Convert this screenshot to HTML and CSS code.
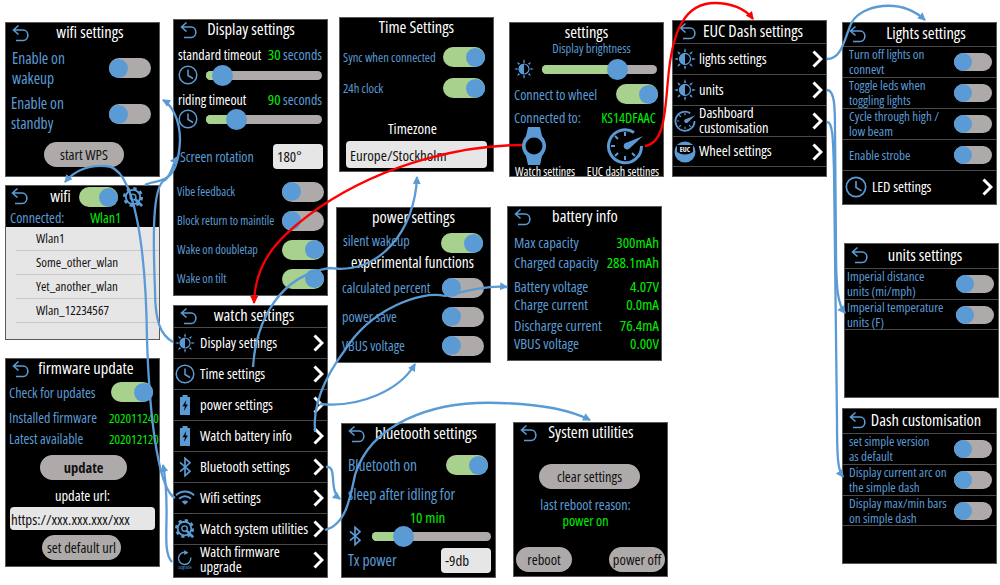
FILE: index.html
```html
<!DOCTYPE html>
<html lang="en">
<head>
    <meta charset="UTF-8">
    <meta name="viewport" content="width=device-width, initial-scale=1.0">
    <title>Watch app settings map</title>
    <link rel="stylesheet" href="styles.css">
</head>
<body>

<svg class="sprite" width="0" height="0">
    <symbol id="i-back" viewBox="0 0 18 18"><path d="M6.5 1.5 L1.5 6 L6.500 10.500 M1.500 6 H11 C17.500 6 17.500 16.500 11 16.500 H4" fill="none" stroke="#5b9bd5" stroke-width="1.600"/></symbol>
    <symbol id="i-sun" viewBox="0 0 22 22"><circle cx="11" cy="11" r="5.500" fill="none" stroke="#5b9bd5" stroke-width="1.300"/><path d="M11 5.500 A5.500 5.500 0 0 0 11 16.500 Z" fill="#5b9bd5"/><path d="M11 0 L12.200 3.800 H9.800 Z M11 22 L12.200 18.200 H9.800 Z M0 11 L3.800 12.200 V9.800 Z M22 11 L18.200 12.200 V9.800 Z M3.200 3.200 L6.700 5 L5 6.700 Z M18.800 3.200 L15.300 5 L17 6.700 Z M3.200 18.800 L6.700 17 L5 15.300 Z M18.800 18.800 L15.300 17 L17 15.300 Z" fill="#5b9bd5"/></symbol>
    <symbol id="i-clock" viewBox="0 0 20 20"><circle cx="10" cy="10" r="8.800" fill="none" stroke="#5b9bd5" stroke-width="1.500"/><path d="M10 4.500 V10.500 L15 13.500" fill="none" stroke="#5b9bd5" stroke-width="1.500"/></symbol>
    <symbol id="i-batt" viewBox="0 0 20 24"><path d="M7 0 H13 V2.500 H16 V24 H4 V2.500 H7 Z" fill="#5b9bd5"/><path d="M11.500 6 L7 13.500 H10 L8.500 19.500 L13.500 11.500 H10.500 Z" fill="#000"/></symbol>
    <symbol id="i-bt" viewBox="0 0 16 24"><path d="M2 6.500 L14 17 L8 22.500 V1.500 L14 7 L2 17.500" fill="none" stroke="#5b9bd5" stroke-width="2"/></symbol>
    <symbol id="i-wifi" viewBox="0 0 22 20"><path d="M1 7 C7 1.500 15 1.500 21 7 M4.500 10.800 C8.500 7.500 13.500 7.500 17.500 10.800" fill="none" stroke="#5b9bd5" stroke-width="2"/><path d="M7.500 14 C9.500 12.300 12.500 12.300 14.500 14 L11 17.500 Z" fill="#5b9bd5"/></symbol>
    <symbol id="i-cog" viewBox="0 0 22 22"><circle cx="10.500" cy="10.500" r="7.500" fill="none" stroke="#5b9bd5" stroke-width="2"/><circle cx="10.500" cy="10.500" r="9" fill="none" stroke="#5b9bd5" stroke-width="3" stroke-dasharray="3.500 3.570"/><circle cx="10.500" cy="10.500" r="3" fill="none" stroke="#5b9bd5" stroke-width="1.500"/><path d="M12.500 12.500 L20 20" stroke="#5b9bd5" stroke-width="3"/></symbol>
    <symbol id="i-upgrade" viewBox="0 0 22 26"><path d="M18.500 10 A8 8 0 1 1 13 3.300" fill="none" stroke="#5b9bd5" stroke-width="1.800"/><path d="M10 0 L15.500 3.500 L10 6.500 Z" fill="#5b9bd5"/><text x="11" y="25" class="tiny" text-anchor="middle">upgrade</text></symbol>
    <symbol id="i-watch" viewBox="0 0 24 38"><path d="M6 0 H18 L20 9 Q24 14 24 19 Q24 24 20 29 L18 38 H6 L4 29 Q0 24 0 19 Q0 14 4 9 Z" fill="#5b9bd5"/><circle cx="12" cy="19" r="8.500" fill="#000"/></symbol>
    <symbol id="i-gauge" viewBox="0 0 38 38"><path d="M28 5.500 A16.500 16.500 0 1 0 35.500 19" fill="none" stroke="#5b9bd5" stroke-width="3"/><path d="M19 5 V9 M5 19 H9 M19 29 V33 M9 9 L12 12 M9 29 L12 26 M29 29 L26 26" stroke="#5b9bd5" stroke-width="2"/><path d="M37 9 L21 15.500 A3.500 3.500 0 1 0 24 21 Z" fill="#5b9bd5"/></symbol>
    <symbol id="i-euc" viewBox="0 0 22 22"><circle cx="11" cy="11" r="10.500" fill="#5b9bd5"/><path d="M3 4 H19 V11 Q11 16 3 11 Z" fill="#000"/><text x="11" y="10.500" class="badge" text-anchor="middle">EUC</text></symbol>
    <symbol id="i-chev" viewBox="0 0 11 18"><path d="M1.500 1.500 L9 9 L1.500 16.500" fill="none" stroke="#fff" stroke-width="3"/></symbol>
</svg>

<div class="canvas">

    <section class="screen s-wifi">
        <div class="head"><svg class="back"><use href="#i-back"/></svg><h2>wifi settings</h2></div>
        <div class="row big wifi-row"><span>Enable on<br>wakeup</span><span class="toggle"></span></div>
        <div class="row big wifi-row2"><span>Enable on<br>standby</span><span class="toggle"></span></div>
        <button class="btn wps">start WPS</button>
    </section>

    <section class="screen s-display">
        <div class="head"><svg class="back"><use href="#i-back"/></svg><h2>Display settings</h2></div>
        <div class="row timeout"><span class="white">standard timeout</span><span><b class="ok">30</b> seconds</span></div>
        <div class="row slide-row"><svg class="ico"><use href="#i-clock"/></svg><div class="slider"><div class="fill" style="width:15%"></div></div></div>
        <div class="row timeout gap4"><span class="white">riding timeout</span><span><b class="ok">90</b> seconds</span></div>
        <div class="row slide-row"><svg class="ico"><use href="#i-clock"/></svg><div class="slider"><div class="fill" style="width:27%"></div></div></div>
        <div class="row rotation"><span>Screen rotation</span><span class="box">180°</span></div>
        <div class="row tall first"><span>Vibe feedback</span><span class="toggle"></span></div>
        <div class="row tall"><span>Block return to maintile</span><span class="toggle"></span></div>
        <div class="row tall"><span>Wake on doubletap</span><span class="toggle on"></span></div>
        <div class="row tall"><span>Wake on tilt</span><span class="toggle on"></span></div>
    </section>

    <section class="screen s-list">
        <div class="list-head">
            <svg class="back"><use href="#i-back"/></svg>
            <h2>wifi</h2>
            <span class="toggle on"></span>
            <svg class="cog"><use href="#i-cog"/></svg>
        </div>
        <div class="row connected"><span>Connected:</span><span class="ok">Wlan1</span></div>
        <ul class="wlans">
            <li>Wlan1</li>
            <li>Some_other_wlan</li>
            <li>Yet_another_wlan</li>
            <li>Wlan_12234567</li>
        </ul>
    </section>

    <section class="screen s-firmware">
        <div class="head"><svg class="back"><use href="#i-back"/></svg><h2>firmware update</h2></div>
        <div class="row check"><span>Check for updates</span><span class="toggle on"></span></div>
        <div class="row fw first"><span>Installed firmware</span><span class="ok num">2020112401</span></div>
        <div class="row fw"><span>Latest available</span><span class="ok num">2020121202</span></div>
        <button class="btn update"><b>update</b></button>
        <div class="url-label">update url:</div>
        <div class="box url">https://xxx.xxx.xxx/xxx</div>
        <button class="btn default">set default url</button>
    </section>

    <section class="screen s-watch">
        <div class="head"><svg class="back"><use href="#i-back"/></svg><h2>watch settings</h2></div>
        <div class="menu"><svg class="ico"><use href="#i-sun"/></svg><span>Display settings</span><svg class="chev"><use href="#i-chev"/></svg></div>
        <div class="menu"><svg class="ico"><use href="#i-clock"/></svg><span>Time settings</span><svg class="chev"><use href="#i-chev"/></svg></div>
        <div class="menu"><svg class="ico"><use href="#i-batt"/></svg><span>power settings</span><svg class="chev"><use href="#i-chev"/></svg></div>
        <div class="menu"><svg class="ico"><use href="#i-batt"/></svg><span>Watch battery info</span><svg class="chev"><use href="#i-chev"/></svg></div>
        <div class="menu"><svg class="ico"><use href="#i-bt"/></svg><span>Bluetooth settings</span><svg class="chev"><use href="#i-chev"/></svg></div>
        <div class="menu"><svg class="ico"><use href="#i-wifi"/></svg><span>Wifi settings</span><svg class="chev"><use href="#i-chev"/></svg></div>
        <div class="menu"><svg class="ico"><use href="#i-cog"/></svg><span>Watch system utilities</span><svg class="chev"><use href="#i-chev"/></svg></div>
        <div class="menu"><svg class="ico"><use href="#i-upgrade"/></svg><span>Watch firmware<br>upgrade</span><svg class="chev"><use href="#i-chev"/></svg></div>
    </section>

    <section class="screen s-time">
        <div class="head plain"><h2>Time Settings</h2></div>
        <div class="row time-row"><span>Sync when connected</span><span class="toggle on"></span></div>
        <div class="row time-row2"><span>24h clock</span><span class="toggle on"></span></div>
        <h3 class="zone">Timezone</h3>
        <div class="box zone-box">Europe/Stockholm</div>
    </section>

    <section class="screen s-settings">
        <div class="head plain"><h2>settings</h2></div>
        <div class="centered bright">Display brightness</div>
        <div class="row slide-row set-slide"><svg class="ico"><use href="#i-sun"/></svg><div class="slider"><div class="fill" style="width:66%"></div></div></div>
        <div class="row wheel"><span>Connect to wheel</span><span class="toggle on"></span></div>
        <div class="row conn"><span>Connected to:</span><span class="ok">KS14DFAAC</span></div>
        <div class="picks">
            <div class="pick"><svg class="watch"><use href="#i-watch"/></svg><span>Watch settings</span></div>
            <div class="pick"><svg class="gauge"><use href="#i-gauge"/></svg><span>EUC dash settings</span></div>
        </div>
    </section>

    <section class="screen s-power">
        <div class="head plain"><h2>power settings</h2></div>
        <div class="row silent"><span>silent wakeup</span><span class="toggle on"></span></div>
        <h3 class="exp">experimental functions</h3>
        <div class="row pow"><span>calculated percent</span><span class="toggle"></span></div>
        <div class="row pow"><span>power save</span><span class="toggle"></span></div>
        <div class="row pow"><span>VBUS voltage</span><span class="toggle"></span></div>
    </section>

    <section class="screen s-battery">
        <div class="head"><svg class="back"><use href="#i-back"/></svg><h2>battery info</h2></div>
        <div class="stats">
            <div class="row stat"><span>Max capacity</span><b class="ok">300mAh</b></div>
            <div class="row stat"><span>Charged capacity</span><b class="ok">288.1mAh</b></div>
            <div class="row stat"><span>Battery voltage</span><b class="ok">4.07V</b></div>
            <div class="row stat"><span>Charge current</span><b class="ok">0.0mA</b></div>
            <div class="row stat"><span>Discharge current</span><b class="ok">76.4mA</b></div>
            <div class="row stat"><span>VBUS voltage</span><b class="ok">0.00V</b></div>
        </div>
    </section>

    <section class="screen s-bt">
        <div class="head"><svg class="back"><use href="#i-back"/></svg><h2>bluetooth settings</h2></div>
        <div class="row bt-on"><span>Bluetooth on</span><span class="toggle on"></span></div>
        <div class="row bt-sleep"><span>sleep after idling for</span></div>
        <div class="centered ok bt-min">10 min</div>
        <div class="row slide-row bt-slide"><svg class="ico"><use href="#i-bt"/></svg><div class="slider"><div class="fill" style="width:27%"></div></div></div>
        <div class="row bt-tx"><span>Tx power</span><span class="box">-9db</span></div>
    </section>

    <section class="screen s-system">
        <div class="head"><svg class="back"><use href="#i-back"/></svg><h2>System utilities</h2></div>
        <button class="btn clear">clear settings</button>
        <div class="centered reason">last reboot reason:</div>
        <div class="centered ok reason">power on</div>
        <div class="sys-btns"><button class="btn">reboot</button><button class="btn">power off</button></div>
    </section>

    <section class="screen s-euc">
        <div class="head"><svg class="back"><use href="#i-back"/></svg><h2>EUC Dash settings</h2></div>
        <div class="menu"><svg class="ico"><use href="#i-sun"/></svg><span>lights settings</span><svg class="chev"><use href="#i-chev"/></svg></div>
        <div class="menu"><svg class="ico"><use href="#i-sun"/></svg><span>units</span><svg class="chev"><use href="#i-chev"/></svg></div>
        <div class="menu"><svg class="ico"><use href="#i-gauge"/></svg><span>Dashboard<br>customisation</span><svg class="chev"><use href="#i-chev"/></svg></div>
        <div class="menu last"><svg class="ico"><use href="#i-euc"/></svg><span>Wheel settings</span><svg class="chev"><use href="#i-chev"/></svg></div>
    </section>

    <section class="screen s-lights">
        <div class="head"><svg class="back"><use href="#i-back"/></svg><h2>Lights settings</h2></div>
        <div class="opt"><span>Turn off lights on<br>connevt</span><span class="toggle small"></span></div>
        <div class="opt"><span>Toggle leds when<br>toggling lights</span><span class="toggle small"></span></div>
        <div class="opt"><span>Cycle through high /<br>low beam</span><span class="toggle small"></span></div>
        <div class="opt"><span>Enable strobe</span><span class="toggle small"></span></div>
        <div class="menu led"><svg class="ico"><use href="#i-clock"/></svg><span>LED settings</span><svg class="chev"><use href="#i-chev"/></svg></div>
    </section>

    <section class="screen s-units">
        <div class="head"><svg class="back"><use href="#i-back"/></svg><h2>units settings</h2></div>
        <div class="opt"><span>Imperial distance<br>units (mi/mph)</span><span class="toggle small"></span></div>
        <div class="opt last"><span>Imperial temperature<br>units (F)</span><span class="toggle small"></span></div>
    </section>

    <section class="screen s-dash">
        <div class="head"><svg class="back"><use href="#i-back"/></svg><h2>Dash customisation</h2></div>
        <div class="opt"><span>set simple version<br>as default</span><span class="toggle small"></span></div>
        <div class="opt"><span>Display current arc on<br>the simple dash</span><span class="toggle small"></span></div>
        <div class="opt last"><span>Display max/min bars<br>on simple dash</span><span class="toggle small"></span></div>
    </section>

    <!-- navigation arrows between the screens -->
    <svg class="wires" width="1000" height="585" viewBox="0 0 1000 585">
        <defs>
            <marker id="tip-blue" markerWidth="9" markerHeight="8" refX="7" refY="4" orient="auto" markerUnits="userSpaceOnUse"><path d="M0 0 L8 4 L0 8 Z" fill="#5b9bd5"/></marker>
            <marker id="tip-red" markerWidth="9" markerHeight="8" refX="7" refY="4" orient="auto" markerUnits="userSpaceOnUse"><path d="M0 0 L8 4 L0 8 Z" fill="#f00"/></marker>
        </defs>
        <g class="blue" marker-end="url(#tip-blue)">
            <path d="M175 498 C160 490 150 430 147 340 C146 250 135 165 105 166 C90 165 75 170 65 182"/>
            <path d="M172 562 C160 550 172 510 163 465"/>
            <path d="M173 342 C160 335 155 320 155 290 C153 240 152 185 165 180 C172 175 172 165 177 157"/>
            <path d="M145 185 C155 178 178 190 180 140 C180 120 172 105 163 100"/>
            <path d="M253 367 C256 320 280 275 330 268 C380 275 415 230 417 177"/>
            <path d="M315 432 C312 400 330 370 345 350 C370 310 420 290 445 296 C470 290 490 285 507 287"/>
            <path d="M320 404 C360 408 400 390 415 364"/>
            <path d="M326 467 C338 465 328 490 340 499"/>
            <path d="M325 530 C345 525 350 500 355 475 C370 425 430 400 500 403 C540 404 570 410 590 420"/>
            <path d="M827 59 C843 59 845 35 852 22 C862 5 900 -3 925 20"/>
            <path d="M827 90 C835 90 835 110 835 130 L836 250 C836 290 838 305 845 313"/>
            <path d="M827 122 C833 122 833 140 834 170 L837 420 C837 460 838 470 843 477"/>
        </g>
        <g class="red" marker-end="url(#tip-red)">
            <path d="M522 145 C470 145 390 160 320 207 C280 235 255 260 254 303"/>
            <path d="M645 146 C665 143 665 110 668 80 C672 30 685 3 715 3 C730 3 745 8 753 19"/>
        </g>
    </svg>

</div>

</body>
</html>
```

FILE: styles.css
```css
/* General Styling */
html, body {
    margin: 0;
    background-color: #ffffff;
}
body {
    font-family: "Open Sans", "Liberation Sans", sans-serif;
    font-stretch: 75%;
    font-size: 14px;
    color: #5b9bd5;
}
.sprite {
    display: block;
    height: 0;
}
.canvas {
    position: relative;
    width: 1000px;
    height: 585px;
    overflow: hidden;
}
.wires {
    position: absolute;
    left: 0;
    top: 0;
    pointer-events: none;
}
.wires g path {
    fill: none;
    stroke-width: 2.300;
}
.wires .blue path { stroke: #5b9bd5; }
.wires .red path { stroke: #f00; }
.tiny {
    font-size: 6px;
    fill: #5b9bd5;
}
.badge {
    font-size: 7px;
    font-weight: 700;
    fill: #fff;
}

/* Screens sit on a free canvas, each at its own spot */
.screen {
    position: absolute;
    box-sizing: border-box;
    width: 155px;
    height: 155px;
    background-color: #000;
    border: 1px solid #595959;
    overflow: hidden;
}
.s-wifi { left: 5px; top: 22px; }
.s-display { left: 173px; top: 19px; height: 277px; }
.s-list { left: 5px; top: 185px; }
.s-firmware { left: 5px; top: 358px; height: 209px; }
.s-watch { left: 173px; top: 305px; height: 273px; }
.s-time { left: 339px; top: 17px; }
.s-settings { left: 509px; top: 22px; }
.s-power { left: 336px; top: 207px; height: 156px; }
.s-battery { left: 507px; top: 206px; }
.s-bt { left: 341px; top: 423px; }
.s-system { left: 513px; top: 422px; }
.s-euc { left: 672px; top: 20px; height: 157px; }
.s-lights { left: 842px; top: 22px; height: 183px; }
.s-units { left: 844px; top: 243px; }
.s-dash { left: 842px; top: 408px; height: 156px; }

/* Header */
.head {
    display: flex;
    align-items: center;
    height: 21px;
    padding: 0 17px 0 6px;
}
.head h2 {
    flex: 1;
    margin: 0 0 4px;
    font-size: 16.500px;
    font-weight: 500;
    line-height: 21px;
    text-align: center;
    color: #fff;
}
.head.plain {
    padding: 0;
}
.back {
    width: 18px;
    height: 18px;
    margin-bottom: 2px;
    flex: none;
}
.s-wifi .head, .s-bt .head { padding-right: 9px; }
.s-display .head, .s-battery .head, .s-system .head { padding-right: 23px; }
.s-lights .head, .s-dash .head { padding-right: 11px; }
.s-euc .head { height: 22px; }
.s-lights .head { height: 23px; }
.s-units .head, .s-dash .head { height: 24px; }

/* Rows and controls */
.row {
    display: flex;
    align-items: center;
    justify-content: space-between;
    padding: 0 8px 0 6px;
}
.toggle {
    display: flex;
    align-items: center;
    flex: none;
    box-sizing: border-box;
    width: 42px;
    height: 20px;
    border-radius: 10px;
    background-color: #aeaaaa;
}
.toggle::before {
    content: "";
    width: 19px;
    height: 19px;
    border-radius: 50%;
    background-color: #5b9bd5;
}
.toggle.on {
    justify-content: flex-end;
    background-color: #a9d18e;
}
.toggle.small {
    width: 38px;
    height: 18px;
}
.toggle.small::before {
    width: 18px;
    height: 18px;
}
.slider {
    flex: 1;
    height: 9px;
    border-radius: 5px;
    background-color: #aeaaaa;
}
.fill {
    position: relative;
    height: 9px;
    border-radius: 5px;
    background-color: #a9d18e;
}
.fill::after {
    content: "";
    position: absolute;
    right: -10px;
    top: -6px;
    width: 21px;
    height: 21px;
    border-radius: 50%;
    background-color: #5b9bd5;
}
.box {
    box-sizing: border-box;
    display: flex;
    align-items: center;
    width: 50px;
    height: 25px;
    padding-left: 4px;
    border-radius: 4px;
    background-color: #e7e6e6;
    color: #111;
    font-size: 15px;
}
.btn {
    display: block;
    height: 25px;
    padding: 0;
    border: none;
    border-radius: 13px;
    background-color: #aeaaaa;
    color: #111;
    font-family: inherit;
    font-stretch: 75%;
    font-size: 14.500px;
    font-weight: 500;
}
.ico {
    width: 20px;
    height: 20px;
    flex: none;
}
.white { color: #fff; }
.ok { color: #00f000; font-weight: 500; }
.centered { text-align: center; }
.slide-row {
    height: 20px;
    gap: 8px;
    padding: 0 5px 0 4px;
}

/* wifi settings */
.big {
    font-size: 15.500px;
    line-height: 20px;
}
.wifi-row { height: 44px; margin-top: 2px; }
.wifi-row2 { height: 44px; margin-top: 2px; padding-left: 5px; }
.wifi-row2 span:first-child { margin-bottom: 3px; }
.wps { width: 80px; margin: 6px 0 0 38px; }

/* Display settings */
.timeout {
    height: 22px;
    margin-top: 2px;
    font-size: 14px;
    padding: 0 5px 0 4px;
    white-space: nowrap;
}
.timeout b { font-size: 15px; }
.gap4 { margin: 3px 0 -1px; }
.rotation {
    height: 26px;
    margin-top: 14px;
    padding-right: 4px;
    font-size: 14px;
}
.tall {
    height: 29px;
    padding-right: 3px;
    padding-left: 3px;
    font-size: 12px;
    white-space: nowrap;
}
.tall.first { margin-top: 8px; }

/* wifi list */
.list-head {
    display: flex;
    align-items: center;
    height: 22px;
    padding-left: 5px;
}
.list-head h2 {
    width: 29px;
    margin: 0 4px 4px 17px;
    font-size: 16.500px;
    font-weight: 500;
    line-height: 21px;
    text-align: center;
    color: #fff;
}
.list-head .toggle { width: 39px; }
.cog {
    width: 21px;
    height: 21px;
    margin-left: 5px;
}
.connected {
    height: 19px;
    padding: 0 38px 0 4px;
}
.wlans {
    margin: 0;
    padding: 0 0 0 10px;
    height: 112px;
    list-style: none;
    background-color: #e7e6e6;
    color: #111;
    font-size: 13px;
}
.wlans li {
    box-sizing: border-box;
    height: 24px;
    line-height: 23px;
    padding-left: 20px;
    border-bottom: 1px solid #c9c9c9;
}

/* firmware update */
.check { height: 22px; margin-top: 1px; padding: 0 6px 0 3px; }
.fw { height: 21px; padding: 0 0 0 3px; white-space: nowrap; }
.fw.first { margin-top: 4px; }
.num {
    width: 50px;
    overflow: hidden;
    font-size: 13px;
}
.update { width: 87px; margin: 6px 0 0 34px; }
.url-label {
    margin-top: 5px;
    height: 22px;
    line-height: 22px;
    text-align: center;
    font-size: 14.500px;
    color: #fff;
}
.url {
    width: 145px;
    height: 23px;
    margin: 0 0 0 4px;
    padding-left: 1px;
}
.default { width: 79px; margin: 5px 0 0 36px; }

/* menus */
.menu {
    display: flex;
    align-items: center;
    box-sizing: border-box;
    height: 31px;
    padding: 0 3px 0 1px;
    border-top: 1px solid #4a4a4a;
    color: #fff;
    font-size: 14.500px;
    font-weight: 500;
    line-height: 15px;
}
.menu span {
    flex: 1;
    margin: 0 0 2px 5px;
}
.chev {
    width: 11px;
    height: 18px;
    flex: none;
}
.menu.last { border-bottom: 1px solid #4a4a4a; }
.s-euc .ico { width: 22px; height: 22px; }
.s-euc .menu span { margin-left: 3px; }

/* Time settings */
.time-row { height: 22px; margin-top: 7px; padding: 0 8px 0 3px; font-size: 12.500px; }
.time-row2 { height: 22px; margin-top: 9px; padding: 0 8px 0 3px; font-size: 12.500px; }
.zone {
    margin: 19px 0 0;
    padding-right: 8px;
    font-size: 15px;
    font-weight: 500;
    text-align: center;
    color: #fff;
    line-height: 20px;
}
.zone-box {
    width: 141px;
    height: 27px;
    margin: 3px 0 0 6px;
}

/* settings */
.bright { font-size: 12.500px; padding-left: 10px; line-height: 13px; margin-top: -2px; }
.set-slide { padding: 0 6px 0 4px; margin-top: 4px; }
.wheel { height: 22px; margin-top: 4px; padding: 0 5px 0 4px; }
.conn { height: 19px; margin-top: 3px; padding: 0 7px 0 4px; }
.picks {
    display: flex;
    align-items: flex-start;
    height: 52px;
}
.pick {
    display: flex;
    flex-direction: column;
    align-items: center;
    color: #fff;
    font-size: 12px;
    line-height: 14px;
    white-space: nowrap;
}
.pick:first-child { width: 68px; margin-left: 1px; }
.pick:last-child { width: 78px; margin-left: 5px; }
.watch { width: 24px; height: 38px; align-self: flex-start; margin-left: 11px; }
.gauge { width: 38px; height: 38px; margin-left: 3px; }

/* power settings */
.silent { height: 24px; margin-top: 2px; padding: 0 7px 0 6px; font-size: 14px; }
.silent span:first-child { margin-bottom: 6px; }
.exp {
    margin: -3px 0 0;
    padding-right: 2px;
    font-size: 15.500px;
    font-weight: 500;
    text-align: center;
    color: #fff;
    line-height: 21px;
}
.pow { height: 29px; margin-top: 0; padding: 0 6px 0 5px; font-size: 14px; }

/* battery info */
.stats { margin-top: 4px; }
.stat { height: 20px; padding: 0 2px 0 6px; font-size: 14.500px; white-space: nowrap; }
.stat b { font-size: 15px; }
.stat:nth-child(3) { margin-top: 4px; }
.stat:nth-child(4) { margin-top: -2px; }
.stat:nth-child(5) { margin-top: 1px; }
.stat:nth-child(6) { margin-top: -2px; }

/* bluetooth */
.bt-on { height: 24px; margin-top: 8px; padding: 0 7px 0 6px; font-size: 15.500px; }
.bt-sleep { height: 22px; margin-top: 6px; font-size: 15.500px; }
.bt-min { height: 22px; margin-top: 1px; padding-left: 18px; font-size: 15px; line-height: 22px; }
.bt-slide { margin-top: -2px; padding: 0 4px 0 6px; gap: 10px; }
.bt-slide .ico { width: 14px; }
.bt-tx { height: 26px; margin-top: 1px; padding: 0 4px 0 6px; font-size: 15.500px; }

/* System utilities */
.clear { width: 101px; margin: 20px 0 0 25px; }
.reason { padding-right: 10px; line-height: 16px; }
.clear + .reason { margin-top: 8px; }
.sys-btns {
    display: flex;
    justify-content: space-between;
    margin-top: 18px;
    padding: 0 2px;
}
.sys-btns .btn { width: 56px; }

/* Option rows with two line labels */
.opt {
    display: flex;
    align-items: center;
    justify-content: space-between;
    box-sizing: border-box;
    height: 31px;
    padding: 0 4px 0 6px;
    border-top: 1px solid #4a4a4a;
    font-size: 13px;
    line-height: 15px;
}
.opt.last { border-bottom: 1px solid #4a4a4a; }
.led { height: 33px; padding-left: 2px; }
.led .ico { width: 22px; height: 22px; }
.s-units .opt { padding-left: 2px; }
```
